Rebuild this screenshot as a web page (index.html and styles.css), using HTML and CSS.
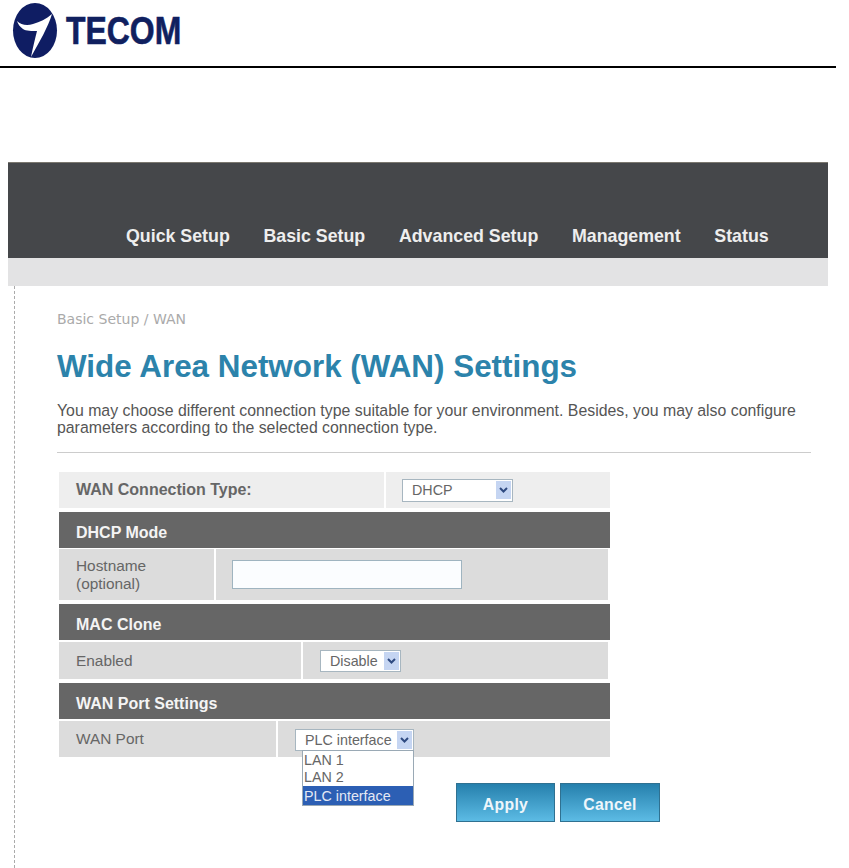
FILE: index.html
```html
<!DOCTYPE html>
<html lang="en">
<head>
    <meta charset="UTF-8">
    <title>WAN Settings</title>
    <link rel="stylesheet" href="styles.css">
</head>
<body>

    <div class="logo-row">
        <svg class="logo-mark" width="46" height="56" viewBox="0 0 46 56">
            <ellipse cx="23" cy="27.5" rx="22" ry="27.5" fill="#0f1d63"/>
            <path d="M5 18 C9 22 15 23 21 21 C28 19 34 16 40 11 C36 24 28 38 19 54 C21 44 23 36 25 28 C20 28 14 28 11 26 C8 24 6 21 5 18 Z" fill="#fff"/>
        </svg>
        <span class="logo-text">TECOM</span>
    </div>

    <div class="nav-bar">
        <a class="nav-item">Quick Setup</a>
        <a class="nav-item">Basic Setup</a>
        <a class="nav-item">Advanced Setup</a>
        <a class="nav-item">Management</a>
        <a class="nav-item">Status</a>
    </div>
    <div class="sub-bar"></div>

    <div class="content">
        <p class="crumb">Basic Setup / WAN</p>
        <h1 class="title">Wide Area Network (WAN) Settings</h1>
        <p class="intro">You may choose different connection type suitable for your environment. Besides, you may also configure parameters according to the selected connection type.</p>
        <div class="rule"></div>

        <div class="form-table">
            <div class="row row-light row-type">
                <div class="cell label-strong col-type">WAN Connection Type:</div>
                <div class="cell">
                    <div class="select select-dhcp">DHCP<span class="arrow"><svg width="9" height="6" viewBox="0 0 9 6"><path d="M1 1 L4.5 4.5 L8 1" fill="none" stroke="#2f4a80" stroke-width="2"/></svg></span></div>
                </div>
            </div>

            <div class="section">DHCP Mode</div>
            <div class="row row-host">
                <div class="cell col-host">Hostname<br>(optional)</div>
                <div class="cell"><div class="text-input"></div></div>
            </div>

            <div class="section">MAC Clone</div>
            <div class="row row-mac">
                <div class="cell col-mac">Enabled</div>
                <div class="cell">
                    <div class="select select-mac">Disable<span class="arrow"><svg width="9" height="6" viewBox="0 0 9 6"><path d="M1 1 L4.5 4.5 L8 1" fill="none" stroke="#2f4a80" stroke-width="2"/></svg></span></div>
                </div>
            </div>

            <div class="section">WAN Port Settings</div>
            <div class="row row-port">
                <div class="cell col-port">WAN Port</div>
                <div class="cell">
                    <div class="select select-port">PLC interface<span class="arrow"><svg width="9" height="6" viewBox="0 0 9 6"><path d="M1 1 L4.5 4.5 L8 1" fill="none" stroke="#2f4a80" stroke-width="2"/></svg></span>
                        <div class="dropdown">
                            <div class="option">LAN 1</div>
                            <div class="option">LAN 2</div>
                            <div class="option option-on">PLC interface</div>
                        </div>
                    </div>
                </div>
            </div>
        </div>

        <div class="actions">
            <button class="btn btn-apply">Apply</button>
            <button class="btn">Cancel</button>
        </div>
    </div>

</body>
</html>
```

FILE: styles.css
```css
body {
    margin: 0;
    background-color: #fff;
    font-family: "Liberation Sans", Arial, sans-serif;
    color: #666;
    overflow: hidden;
}

.logo-row {
    width: 836px;
    height: 66px;
    border-bottom: 2px solid #000;
    display: flex;
    align-items: flex-start;
}

.logo-mark {
    margin: 3px 0 0 12px;
}

.logo-text {
    margin: 11px 0 0 8px;
    font-size: 38px;
    line-height: 40px;
    font-weight: bold;
    color: #10205f;
    transform: scaleX(0.84);
    transform-origin: left;
    -webkit-text-stroke: 0.6px #10205f;
}

.nav-bar {
    margin: 94px 0 0 8px;
    width: 820px;
    height: 96px;
    box-sizing: border-box;
    background-color: #45474a;
    border-top: 1px solid #7a776f;
    display: flex;
    align-items: flex-end;
    gap: 33.7px;
    padding: 0 0 11px 118px;
}

.nav-item {
    color: #eee;
    font-size: 17.8px;
    line-height: 22px;
    font-weight: bold;
}

.sub-bar {
    margin-left: 8px;
    width: 820px;
    height: 28px;
    background-color: #e3e3e4;
}

.content {
    margin-left: 14px;
    border-left: 1px dashed #aaa;
    padding: 24px 0 0 42px;
    height: 558px;
    width: 754px;
}

.crumb {
    margin: 0;
    font-family: "DejaVu Sans", Verdana, sans-serif;
    font-size: 14px;
    line-height: 18px;
    color: #aaa;
}

.title {
    margin: 21px 0 0;
    font-size: 31.4px;
    line-height: 36px;
    font-weight: bold;
    color: #2c83ab;
    white-space: nowrap;
}

.intro {
    margin: 17px 0 0;
    font-size: 15.85px;
    line-height: 17px;
    color: #555;
}

.rule {
    margin-top: 16px;
    border-top: 1px solid #ccc;
}

.form-table {
    margin: 19px 0 0 2px;
    width: 551px;
}

.row {
    display: flex;
    background-color: #fff;
    gap: 2px;
}

.cell {
    background-color: #dcdcdc;
    flex: 1;
    display: flex;
    align-items: center;
    padding-left: 17px;
    font-size: 15.4px;
    line-height: 18px;
}

.row-light .cell {
    background-color: #eee;
}

.row-type {
    height: 36px;
    margin-bottom: 4px;
}

.label-strong {
    font-size: 16px;
    font-weight: bold;
    color: #666;
}

.col-type {
    flex: 0 0 325px;
    box-sizing: border-box;
}

.section {
    height: 36px;
    background-color: #666;
    color: #f4f4f4;
    font-size: 16px;
    line-height: 42px;
    font-weight: bold;
    padding-left: 17px;
    box-sizing: border-box;
}

.row-host {
    height: 51px;
    margin: 1px 2px 4px 0;
}

.col-host {
    flex: 0 0 155px;
    box-sizing: border-box;
    display: block;
    padding-top: 8px;
}

.row-mac {
    height: 37px;
    margin: 2px 2px 4px 0;
}

.col-mac {
    flex: 0 0 242px;
    box-sizing: border-box;
}

.row-port {
    height: 36px;
    margin-top: 2px;
}

.col-port {
    flex: 0 0 217px;
    box-sizing: border-box;
}

.text-input {
    width: 230px;
    height: 29px;
    margin-left: -1px;
    box-sizing: border-box;
    border: 1px solid #9fb4c0;
    background-color: #fbfdff;
}

.select {
    position: relative;
    height: 22px;
    box-sizing: border-box;
    border: 1px solid #a7b6c0;
    background-color: #fff;
    padding-left: 9px;
    display: flex;
    align-items: center;
    justify-content: space-between;
    font-size: 14.3px;
    color: #666;
}

.select-dhcp {
    width: 111px;
    height: 23px;
    margin-left: -1px;
}

.select-mac {
    width: 81px;
}

.select-port {
    width: 119px;
    margin-top: 2px;
}

.arrow {
    width: 15px;
    height: 18px;
    margin-right: 1px;
    background-color: #c5d5f2;
    display: flex;
    align-items: center;
    justify-content: center;
}

.dropdown {
    position: absolute;
    left: 6px;
    top: 20px;
    width: 112px;
    box-sizing: border-box;
    border: 1px solid #9aa9b5;
    padding-top: 1px;
    background-color: #fff;
    font-size: 14.3px;
}

.option {
    height: 17px;
    line-height: 17px;
    padding-left: 1px;
    color: #666;
}

.option-on {
    height: 19px;
    line-height: 20px;
    background-color: #2c5fb4;
    color: #e4e9f4;
}

.actions {
    display: flex;
    gap: 5px;
    margin: 26px 0 0 399px;
}

.btn {
    width: 100px;
    height: 39px;
    box-sizing: border-box;
    padding: 4px 0 0;
    border: 1px solid #2f7191;
    background: linear-gradient(#2680ad, #5cbbe4);
    color: #eef6fb;
    font-family: "Liberation Sans", Arial, sans-serif;
    font-size: 15.8px;
    letter-spacing: 0.3px;
    font-weight: bold;
}

.btn-apply {
    width: 99px;
}
```
